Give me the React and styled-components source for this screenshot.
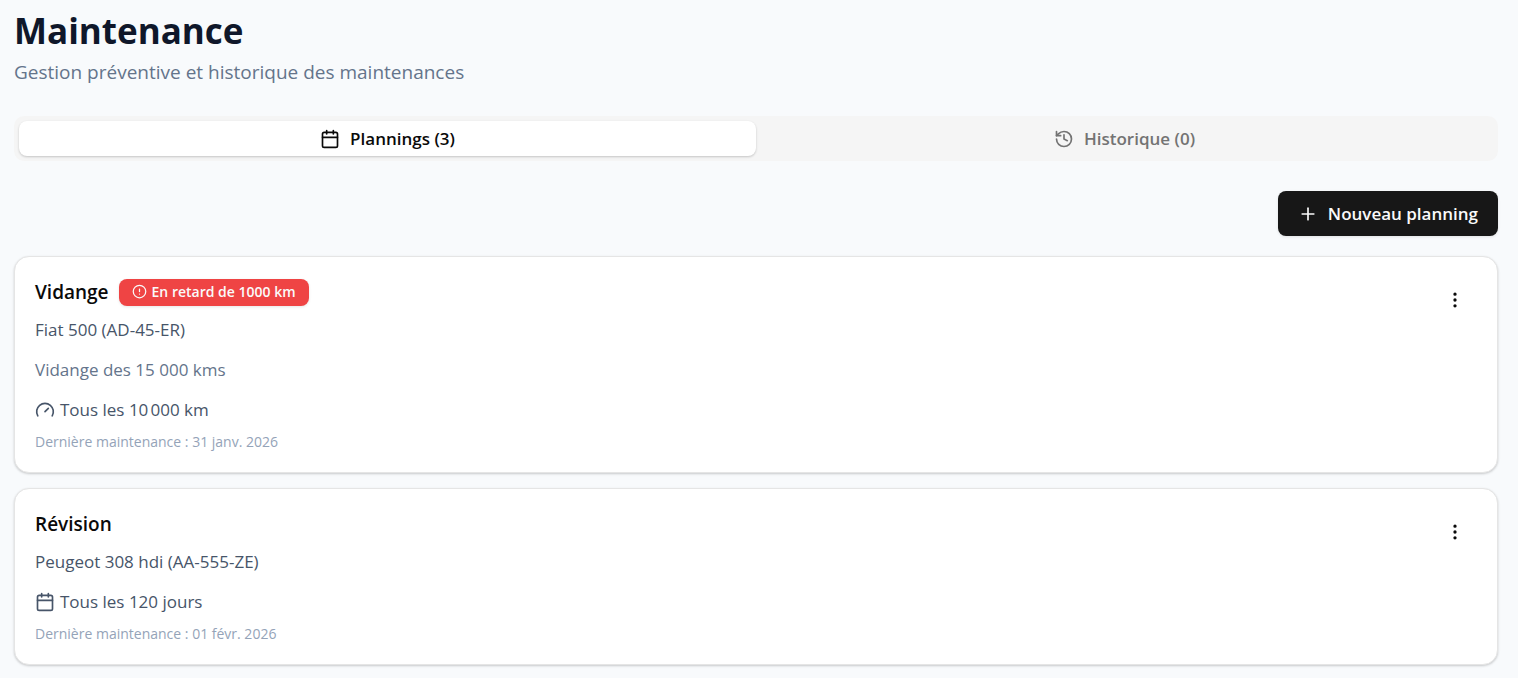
import React, { useState } from 'react';
import styled, { createGlobalStyle } from 'styled-components';
import { Calendar, CircleAlert, EllipsisVertical, Gauge, History, Plus } from 'lucide-react';

const GlobalStyle = createGlobalStyle`
  *, *::before, *::after {
    box-sizing: border-box;
  }

  body {
    margin: 0;
    background-color: #f8fafc;
    color: #0a0a0a;
    font-family: 'Open Sans', 'Noto Sans', sans-serif;
  }

  h1, h2, p {
    margin: 0;
  }

  button {
    font-family: inherit;
    cursor: pointer;
  }
`;

const Page = styled.main`
  padding: 8px 20px 12px 14px;
`;

const Header = styled.header`
  display: flex;
  flex-direction: column;
  gap: 4px;
  margin-bottom: 29px;
`;

const PageTitle = styled.h1`
  font-size: 35px;
  line-height: 45px;
  font-weight: 700;
  color: #0f172a;
`;

const PageSubtitle = styled.p`
  font-size: 19px;
  line-height: 30px;
  color: #64748b;
`;

const TabList = styled.div`
  display: grid;
  grid-template-columns: 1fr 1fr;
  height: 45px;
  padding: 5px;
  margin-bottom: 30px;
  border-radius: 10px;
  background-color: #f5f5f5;
`;

const Tab = styled.button`
  display: flex;
  align-items: center;
  justify-content: center;
  gap: 10px;
  padding: 0 15px;
  border: none;
  border-radius: 8px;
  font-size: 17px;
  line-height: 25px;
  font-weight: 600;
  color: ${props => props.$active ? '#0a0a0a' : '#737373'};
  background-color: ${props => props.$active ? '#fff' : 'transparent'};
  box-shadow: ${props => props.$active ? '0 1px 3px rgba(0, 0, 0, 0.1), 0 1px 2px rgba(0, 0, 0, 0.1)' : 'none'};
`;

const Toolbar = styled.div`
  display: flex;
  justify-content: flex-end;
  margin-bottom: 20px;
`;

const PrimaryButton = styled.button`
  display: inline-flex;
  align-items: center;
  gap: 10px;
  height: 45px;
  padding: 0 20px;
  border: none;
  border-radius: 8px;
  font-size: 17px;
  line-height: 25px;
  font-weight: 600;
  color: #fafafa;
  background-color: #171717;
  box-shadow: 0 1px 3px rgba(0, 0, 0, 0.1);

  &:hover {
    background-color: #2e2e2e;
  }
`;

const PlanList = styled.div`
  display: flex;
  flex-direction: column;
  gap: 15px;
`;

const Card = styled.article`
  display: flex;
  align-items: flex-start;
  justify-content: space-between;
  padding: 20px;
  border: 1px solid #e5e5e5;
  border-radius: 15px;
  background-color: #fff;
  box-shadow: 0 1px 3px rgba(0, 0, 0, 0.1), 0 1px 2px rgba(0, 0, 0, 0.1);
`;

const CardBody = styled.div`
  display: flex;
  flex-direction: column;
  gap: 15px;
`;

const CardGroup = styled.div`
  display: flex;
  flex-direction: column;
  gap: 10px;
`;

const CardHeading = styled.div`
  display: flex;
  align-items: center;
  gap: 10px;
`;

const CardTitle = styled.h2`
  font-size: 19px;
  line-height: 30px;
  font-weight: 600;
  color: #0a0a0a;
`;

const Badge = styled.span`
  display: inline-flex;
  align-items: center;
  gap: 5px;
  padding: 3px 13px 4px;
  border-radius: 8px;
  font-size: 14px;
  line-height: 20px;
  font-weight: 600;
  color: #fafafa;
  background-color: #ef4444;
  box-shadow: 0 1px 3px rgba(0, 0, 0, 0.1);
`;

const CardText = styled.p`
  display: flex;
  align-items: center;
  gap: 5px;
  font-size: 17px;
  line-height: 25px;
  color: ${props => props.$muted ? '#64748b' : '#475569'};
`;

const LastDate = styled.p`
  font-size: 14px;
  line-height: 20px;
  color: #94a3b8;
`;

const MenuButton = styled.button`
  display: flex;
  align-items: center;
  justify-content: center;
  width: 45px;
  height: 45px;
  padding: 0;
  border: none;
  border-radius: 8px;
  color: #0a0a0a;
  background-color: transparent;

  &:hover {
    background-color: #f5f5f5;
  }
`;

const plans = [
  {
    id: 1,
    title: 'Vidange',
    late: 'En retard de 1000 km',
    vehicle: 'Fiat 500 (AD-45-ER)',
    description: 'Vidange des 15 000 kms',
    icon: Gauge,
    interval: 'Tous les 10\u202f000 km',
    last: '31 janv. 2026'
  },
  {
    id: 2,
    title: 'Révision',
    vehicle: 'Peugeot 308 hdi (AA-555-ZE)',
    icon: Calendar,
    interval: 'Tous les 120 jours',
    last: '01 févr. 2026'
  }
];

const PlanCard = ({ plan }) => {
  const IntervalIcon = plan.icon;

  return (
    <Card>
      <CardBody>
        <CardGroup>
          <CardHeading>
            <CardTitle>{plan.title}</CardTitle>
            {plan.late && (
              <Badge>
                <CircleAlert size={15} />
                {plan.late}
              </Badge>
            )}
          </CardHeading>
          <CardText>{plan.vehicle}</CardText>
        </CardGroup>
        {plan.description && <CardText $muted>{plan.description}</CardText>}
        <CardGroup>
          <CardText>
            <IntervalIcon size={20} />
            {plan.interval}
          </CardText>
          <LastDate>Dernière maintenance : {plan.last}</LastDate>
        </CardGroup>
      </CardBody>
      <MenuButton aria-label={`Actions ${plan.title}`}>
        <EllipsisVertical size={20} />
      </MenuButton>
    </Card>
  );
};

const App = () => {
  const [tab, setTab] = useState('plannings');

  return (
    <>
      <GlobalStyle />
      <Page>
        <Header>
          <PageTitle>Maintenance</PageTitle>
          <PageSubtitle>Gestion préventive et historique des maintenances</PageSubtitle>
        </Header>

        <TabList role="tablist">
          <Tab
            role="tab"
            aria-selected={tab === 'plannings'}
            $active={tab === 'plannings'}
            onClick={() => setTab('plannings')}
          >
            <Calendar size={20} />
            Plannings (3)
          </Tab>
          <Tab
            role="tab"
            aria-selected={tab === 'historique'}
            $active={tab === 'historique'}
            onClick={() => setTab('historique')}
          >
            <History size={20} />
            Historique (0)
          </Tab>
        </TabList>

        {tab === 'plannings' && (
          <>
            <Toolbar>
              <PrimaryButton>
                <Plus size={20} />
                Nouveau planning
              </PrimaryButton>
            </Toolbar>
            <PlanList>
              {plans.map(plan => (
                <PlanCard key={plan.id} plan={plan} />
              ))}
            </PlanList>
          </>
        )}
      </Page>
    </>
  );
};

export default App;
